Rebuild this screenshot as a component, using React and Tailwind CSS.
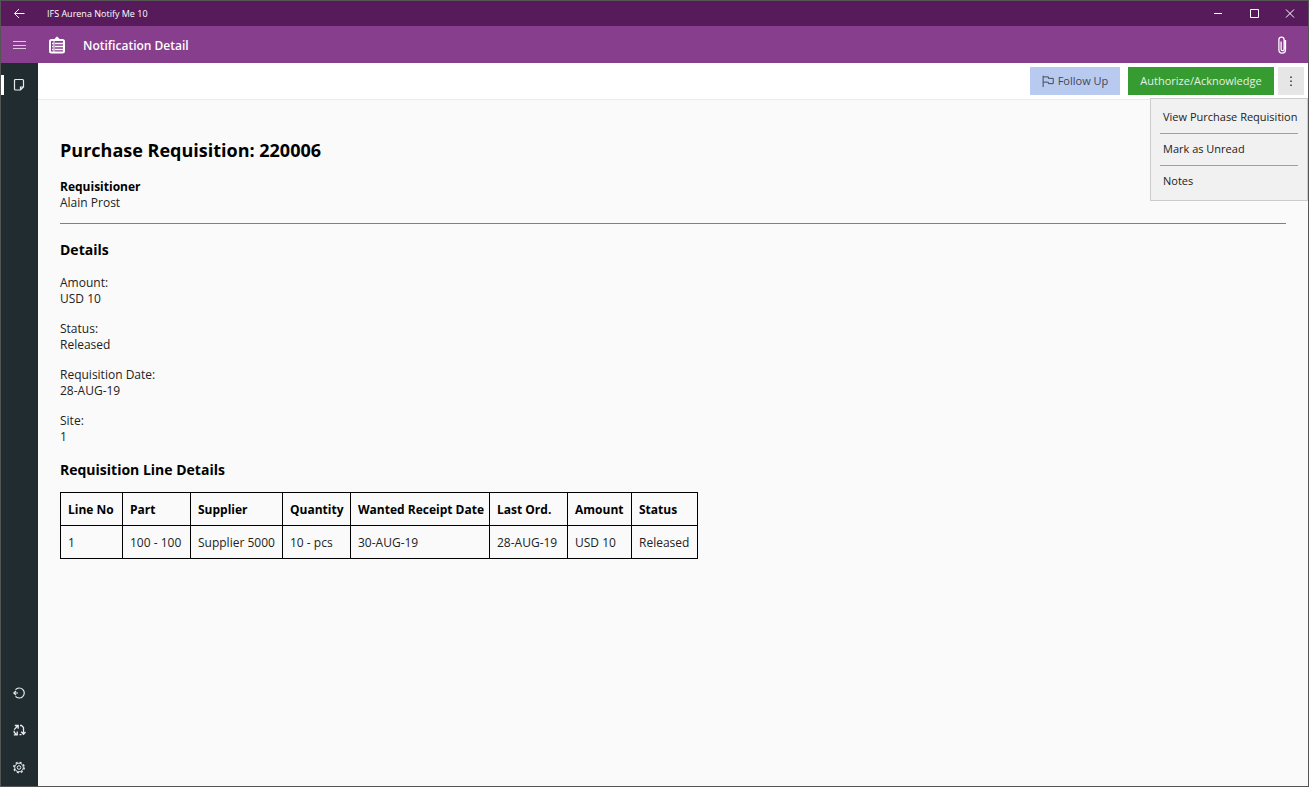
import { useState } from 'react'

const details = [
  { label: 'Amount:', value: 'USD 10' },
  { label: 'Status:', value: 'Released' },
  { label: 'Requisition Date:', value: '28-AUG-19' },
  { label: 'Site:', value: '1' },
]

const columns = [
  { title: 'Line No', width: 'w-[62px]' },
  { title: 'Part', width: 'w-[68px]' },
  { title: 'Supplier', width: 'w-[92px]' },
  { title: 'Quantity', width: 'w-[68px]' },
  { title: 'Wanted Receipt Date', width: 'w-[139px]' },
  { title: 'Last Ord.', width: 'w-[78px]' },
  { title: 'Amount', width: 'w-[64px]' },
  { title: 'Status', width: 'w-[66px]' },
]

const rows = [
  ['1', '100 - 100', 'Supplier 5000', '10 - pcs', '30-AUG-19', '28-AUG-19', 'USD 10', 'Released'],
]

const menuItems = ['View Purchase Requisition', 'Mark as Unread', 'Notes']

function Icon({ className, children, strokeWidth = 1 }) {
  return (
    <svg
      className={className}
      viewBox="0 0 16 16"
      fill="none"
      stroke="currentColor"
      strokeWidth={strokeWidth}
      aria-hidden="true"
    >
      {children}
    </svg>
  )
}

function TitleBar() {
  return (
    <div className="flex h-[25px] items-center bg-[#571b5b] text-white">
      <button type="button" aria-label="Back" className="flex h-full w-9 items-center justify-center">
        <Icon className="size-4">
          <path d="M13.5 7.5H4M8 3 3.5 7.5 8 12" />
        </Icon>
      </button>
      <span className="ml-[10px] grow text-[9px]">IFS Aurena Notify Me 10</span>
      <button type="button" aria-label="Minimize" className="flex h-full w-9 items-center justify-center">
        <Icon className="size-4">
          <path d="M4 7.5h8" />
        </Icon>
      </button>
      <button type="button" aria-label="Maximize" className="flex h-full w-9 items-center justify-center">
        <Icon className="size-4">
          <path d="M4.5 3.5h8v8h-8z" />
        </Icon>
      </button>
      <button type="button" aria-label="Close" className="flex h-full w-9 items-center justify-center">
        <Icon className="size-4">
          <path d="m4 3.5 8 8M12 3.5l-8 8" />
        </Icon>
      </button>
    </div>
  )
}

function Header() {
  return (
    <header className="flex h-[37px] items-center bg-[#873e8d] text-white">
      <button type="button" aria-label="Menu" className="flex h-full w-9 items-center justify-center">
        <Icon className="size-4">
          <path d="M2 4.5h13M2 8.5h13M2 11.5h13" stroke="#dcc5de" />
        </Icon>
      </button>
      <svg className="ml-[11px] size-[18px]" viewBox="0 0 18 18" fill="none" stroke="currentColor" aria-hidden="true">
        <rect x="2" y="4" width="14" height="12.5" rx="1.5" strokeWidth="2" />
        <path d="M5.5 4.5 7.2 2.5 9 .8l1.800 1.700 1.700 2z" fill="currentColor" strokeWidth="0.8" />
        <path d="M4 7.500h1.500M4 10.500h1.500M4 13.500h1.500M7 7.500h8M7 10.500h8M7 13.500h8" strokeWidth="1.300" />
        <path d="M6 5v11" strokeWidth="1" />
      </svg>
      <h1 className="ml-[17px] grow pt-[2px] text-[12px] font-semibold">Notification Detail</h1>
      <button type="button" aria-label="Attachments" className="flex h-full w-[52px] items-center justify-center">
        <svg className="h-[18px] w-[10px]" viewBox="0 0 10 18" fill="none" stroke="currentColor" aria-hidden="true">
          <path
            d="M8.5 4v9.800a3.300 3.300 0 0 1-6.600 0V3.800a2.600 2.600 0 0 1 5.200 0v9.400a1.500 1.500 0 0 1-3 0V5.500"
            strokeWidth="1.300"
          />
        </svg>
      </button>
    </header>
  )
}

function Sidebar() {
  return (
    <nav className="flex w-[37px] shrink-0 flex-col bg-[#212c31] pb-px text-[#e8eaeb]">
      <button
        type="button"
        aria-label="Notifications"
        className="mt-3 flex h-5 items-center justify-center border-l-3 border-white pr-1"
      >
        <Icon className="size-4" strokeWidth={1.2}>
          <path d="M4.500 2.500h7a1 1 0 0 1 1 1V10l-3 3h-5a1 1 0 0 1-1-1V3.500a1 1 0 0 1 1-1zM12.500 10h-3v3" />
        </Icon>
      </button>
      <div className="grow" />
      <button type="button" aria-label="Undo" className="flex h-[37px] items-center justify-center pr-px">
        <Icon className="size-4" strokeWidth={1.2}>
          <path d="M4.500 4.700a5 5 0 1 1 0 6.600" />
          <path d="M7 8H3M5 5.800 2.800 8 5 10.200" />
        </Icon>
      </button>
      <button type="button" aria-label="Sync" className="flex h-[37px] items-center justify-center pr-px">
        <Icon className="size-4" strokeWidth={1.3}>
          <path d="M3.200 7.600 6.800 3.800M3.800 3.500h3.400v3.300" />
          <path d="M3.200 8.800v1.400l2.300 2.500M2.800 12.800h3.400V9.600" />
          <path d="M9 3.500h1.500l2 2v6.500M10.200 9.800l2.300 2.500 2-2.300M8.500 12.700h2" />
        </Icon>
      </button>
      <button type="button" aria-label="Settings" className="flex h-[37px] items-center justify-center pr-px">
        <Icon className="size-4">
          <circle cx="8" cy="8.500" r="4.300" />
          <circle cx="8" cy="8.500" r="1.800" />
          <circle cx="8" cy="8.500" r="5.200" strokeWidth="1.400" strokeDasharray="2.040 2.040" />
        </Icon>
      </button>
    </nav>
  )
}

function Toolbar() {
  const [open, setOpen] = useState(true)

  return (
    <div className="relative flex h-[37px] items-start justify-end border-b border-[#ebebeb] bg-white pt-1 pr-1">
      <button
        type="button"
        className="flex h-7 w-[90px] items-center justify-center gap-1 bg-[#b9caf1] text-[11px] text-[#3f4655]"
      >
        <Icon className="size-3">
          <path d="M1.500 1v15M1.500 2.500h7v2h6.500v7H8.500v-2h-7" strokeWidth="1.300" />
        </Icon>
        Follow Up
      </button>
      <button type="button" className="ml-2 h-7 w-[146px] bg-[#369b31] text-[11px] text-[#e3f2e2]">
        Authorize/Acknowledge
      </button>
      <button
        type="button"
        aria-label="More"
        aria-expanded={open}
        onClick={() => setOpen(!open)}
        className="ml-1 flex h-7 w-[26px] items-center justify-center bg-[#e6e6e6] text-[#333333]"
      >
        <Icon className="size-4">
          <path d="M8 3.500v1.500M8 7.500v1.500M8 11.500v1.500" strokeWidth="1.500" />
        </Icon>
      </button>

      {open && (
        <ul className="absolute top-[35px] right-0 w-[158px] divide-y divide-[#a0a0a0] border border-[#cccccc] bg-[#f1f1f1] px-[9px] pt-[3px] pb-[3px]">
          {menuItems.map((item) => (
            <li key={item}>
              <button type="button" className="block h-[31px] w-full pl-[3px] text-left text-[11px] whitespace-nowrap text-[#222222]">
                {item}
              </button>
            </li>
          ))}
        </ul>
      )}
    </div>
  )
}

function Requisition() {
  return (
    <main className="grow px-[22px] pt-9 text-[12px] leading-4 text-[#222222]">
      <h2 className="text-[18px] leading-7 font-bold text-black">Purchase Requisition: 220006</h2>
      <dl className="mt-[15px]">
        <dt className="font-bold text-black">Requisitioner</dt>
        <dd>Alain Prost</dd>
      </dl>
      <hr className="mt-3 border-[#808080]" />

      <h3 className="mt-[15px] text-[14px] leading-[22px] font-bold text-black">Details</h3>
      <dl className="mt-[14px]">
        {details.map((d) => (
          <div key={d.label} className="mb-[14px]">
            <dt>{d.label}</dt>
            <dd>{d.value}</dd>
          </div>
        ))}
      </dl>

      <h3 className="text-[14px] leading-[22px] font-bold text-black">Requisition Line Details</h3>
      <table className="mt-[11px] w-[637px] table-fixed border-collapse">
        <thead>
          <tr className="h-[33px]">
            {columns.map((c) => (
              <th key={c.title} className={`${c.width} border border-black px-[7px] pt-[2px] text-left font-bold whitespace-nowrap text-black`}>
                {c.title}
              </th>
            ))}
          </tr>
        </thead>
        <tbody>
          {rows.map((row) => (
            <tr key={row[0]} className="h-[33px]">
              {row.map((cell, i) => (
                <td key={i} className="border border-black px-[7px] pt-[2px] whitespace-nowrap">
                  {cell}
                </td>
              ))}
            </tr>
          ))}
        </tbody>
      </table>
    </main>
  )
}

export default function App() {
  return (
    <div className="flex min-h-screen flex-col border border-[#555555] bg-[#fafafa] font-['Open_Sans',sans-serif]">
      <TitleBar />
      <Header />
      <div className="flex grow">
        <Sidebar />
        <div className="flex min-w-0 grow flex-col">
          <Toolbar />
          <Requisition />
        </div>
      </div>
    </div>
  )
}
